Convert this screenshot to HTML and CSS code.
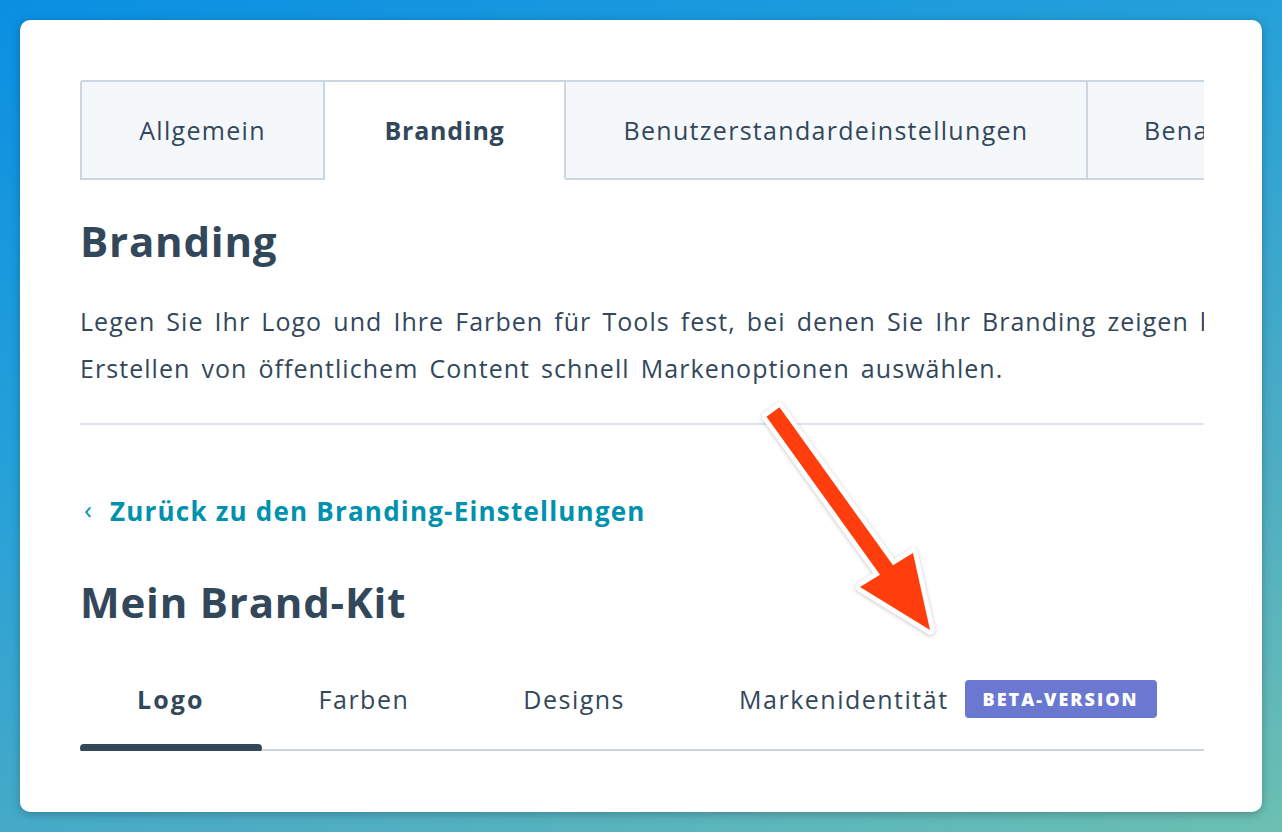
FILE: index.html
```html
<!DOCTYPE html>
<html lang="de">
<head>
<meta charset="utf-8">
<link rel="stylesheet" href="styles.css">
</head>
<body>
<div class="card">
  <div class="inner">
    <div class="tabs">
      <div class="tab first">Allgemein</div>
      <div class="tab active">Branding</div>
      <div class="tab">Benutzerstandardeinstellungen</div>
      <div class="tab">Benachrichtigungen</div>
    </div>
    <h1 class="title">Branding</h1>
    <p class="desc">Legen Sie Ihr Logo und Ihre Farben für Tools fest, bei denen Sie Ihr Branding zeigen können, und beim<br>Erstellen von öffentlichem Content schnell Markenoptionen auswählen.</p>
    <hr class="divider">
    <a class="back"><span class="chev">‹</span>Zurück zu den Branding-Einstellungen</a>
    <h2 class="title2">Mein Brand-Kit</h2>
    <div class="subtabs">
      <div class="subtab on">Logo</div>
      <div class="subtab">Farben</div>
      <div class="subtab">Designs</div>
      <div class="subtab">Markenidentität <span class="badge">BETA-VERSION</span></div>
    </div>
  </div>
</div>
<svg class="arrow" width="1282" height="832" viewBox="0 0 1282 832">
  <defs>
    <filter id="sh" x="-20%" y="-20%" width="140%" height="140%">
      <feDropShadow dx="0" dy="1" stdDeviation="2" flood-color="#000" flood-opacity="0.25"/>
    </filter>
  </defs>
  <polygon filter="url(#sh)" points="779.5,407.3 893,565.3 913,553 930,630 860,587 880,574.7 766.5,416.7" fill="#ff3d0f" stroke="#fff" stroke-width="9" stroke-linejoin="round" paint-order="stroke"/>
</svg>
</body>
</html>
```

FILE: styles.css
```css
html, body {
  margin: 0;
  padding: 0;
}
body {
  width: 1282px;
  height: 832px;
  overflow: hidden;
  background: linear-gradient(160deg, #0a8fe2 0%, #24a0da 35%, #4cacc4 70%, #6cc0b2 100%);
  font-family: "Open Sans", "Lato", sans-serif;
  color: #33475b;
  position: relative;
}
.card {
  position: absolute;
  left: 20px;
  top: 20px;
  width: 1242px;
  height: 792px;
  background: #fff;
  border-radius: 10px;
  box-shadow: 0 2px 10px rgba(0, 0, 0, 0.25);
  box-sizing: border-box;
  padding: 60px 58px 0 60px;
}
.inner {
  width: 1124px;
  overflow: hidden;
}
.tabs {
  display: flex;
  height: 100px;
  white-space: nowrap;
}
.tab {
  flex: none;
  box-sizing: border-box;
  height: 100px;
  display: flex;
  align-items: center;
  justify-content: center;
  font-size: 25px;
  letter-spacing: 1.3px;
  background: #f5f8fa;
  border: 2px solid #cbd6e2;
  border-left: none;
}
.tab.first {
  border-left: 2px solid #cbd6e2;
  border-top-left-radius: 3px;
  width: 245px;
}
.tab:nth-child(2) { width: 241px; }
.tab:nth-child(3) { width: 522px; }
.tab:nth-child(4) { width: 300px; justify-content: flex-start; padding-left: 56px; }
.tab.active {
  background: #fff;
  border-bottom-color: #fff;
  font-weight: 700;
  letter-spacing: 0.8px;
}
.title {
  margin: 34px 0 0;
  font-size: 42px;
  letter-spacing: 0.8px;
  font-weight: 700;
  line-height: 54px;
}
.desc {
  margin: 30px 0 0;
  font-size: 25px;
  letter-spacing: 1.05px;
  word-spacing: 3.5px;
  line-height: 47px;
  white-space: nowrap;
}
.divider {
  margin: 31px 0 0;
  border: none;
  border-top: 2px solid #dfe3eb;
  height: 0;
}
.back {
  display: flex;
  align-items: center;
  margin-top: 67px;
  font-size: 26px;
  letter-spacing: 1.2px;
  font-weight: 700;
  color: #0091ae;
  line-height: 34px;
}
.chev {
  font-weight: 400;
  font-size: 26px;
  margin: 0 17px 4px 4px;
}
.title2 {
  margin: 45px 0 0;
  font-size: 42px;
  letter-spacing: 0.8px;
  font-weight: 700;
  line-height: 54px;
}
.subtabs {
  display: flex;
  margin-top: 40px;
  border-bottom: 2px solid #cbd6e2;
  height: 82px;
  box-sizing: border-box;
}
.subtab {
  position: relative;
  display: flex;
  align-items: center;
  height: 60px;
  padding: 0 57px;
  font-size: 25px;
  letter-spacing: 1.5px;
  white-space: nowrap;
}
.subtab.on {
  font-weight: 700;
  letter-spacing: 2.1px;
}
.subtab.on::after {
  content: "";
  position: absolute;
  left: 0;
  right: 0;
  bottom: -23px;
  height: 8px;
  border-radius: 4px;
  background: #33475b;
}
.badge {
  display: inline-block;
  margin-left: 16px;
  background: #6a78d1;
  color: #fff;
  font-size: 18px;
  font-weight: 800;
  letter-spacing: 2px;
  padding: 0 18px;
  height: 38px;
  line-height: 38px;
  border-radius: 4px;
}
.arrow {
  position: absolute;
  left: 0;
  top: 0;
  pointer-events: none;
}
```
